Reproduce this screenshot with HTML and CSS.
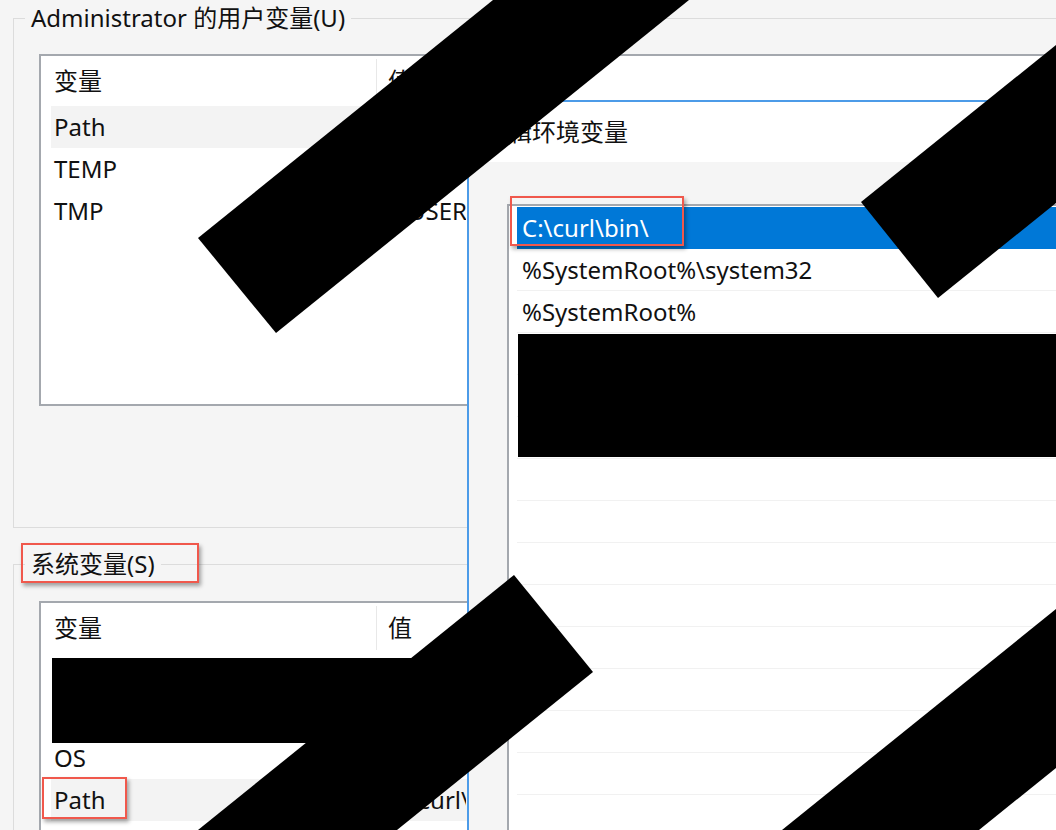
FILE: index.html
```html
<!DOCTYPE html>
<html lang="zh-CN">
<head>
    <meta charset="UTF-8">
    <title>环境变量</title>
    <link rel="stylesheet" href="styles.css">
</head>
<body>
    <div class="screen">
        <div class="win-back">
            <fieldset class="group group-user">
                <legend>Administrator 的用户变量(U)</legend>
                <div class="listview lv-user">
                    <div class="lv-head"><span class="c1">变量</span><span class="c2">值</span></div>
                    <div class="lv-row hot"><span class="c1">Path</span><span class="c2">C:\Users\Administrator</span></div>
                    <div class="lv-row"><span class="c1">TEMP</span><span class="c2">%USERPROFILE%</span></div>
                    <div class="lv-row"><span class="c1">TMP</span><span class="c2">%USERPROFILE%</span></div>
                </div>
            </fieldset>

            <fieldset class="group group-sys">
                <legend>系统变量(S)</legend>
                <div class="listview lv-sys">
                    <div class="lv-head"><span class="c1">变量</span><span class="c2">值</span></div>
                    <div class="lv-row"><span class="c1"></span><span class="c2"></span></div>
                    <div class="lv-row"><span class="c1"></span><span class="c2"></span></div>
                    <div class="lv-row"><span class="c1">OS</span><span class="c2">Windows_NT</span></div>
                    <div class="lv-row hot"><span class="c1">Path</span><span class="c2">C:\curl\bin\</span></div>
                </div>
            </fieldset>
        </div>

        <!-- 编辑环境变量 对话框 -->
        <div class="win-edit">
            <div class="titlebar">编辑环境变量</div>
            <div class="edit-body">
                <div class="pathlist">
                    <div class="path-item selected">C:\curl\bin\</div>
                    <div class="path-item">%SystemRoot%\system32</div>
                    <div class="path-item">%SystemRoot%</div>
                    <div class="path-item"></div>
                    <div class="path-item"></div>
                    <div class="path-item"></div>
                    <div class="path-item"></div>
                    <div class="path-item"></div>
                    <div class="path-item"></div>
                    <div class="path-item"></div>
                    <div class="path-item"></div>
                    <div class="path-item"></div>
                    <div class="path-item"></div>
                    <div class="path-item"></div>
                    <div class="path-item"></div>
                </div>
            </div>
        </div>

        <!-- 标注框 -->
        <div class="mark mark-sys"></div>
        <div class="mark mark-path"></div>
        <div class="mark mark-curl"></div>

        <!-- 涂黑 -->
        <svg class="redact" viewBox="0 0 1056 830" width="1056" height="830">
            <polygon points="198,238 276,333 689,0 493,0"/>
            <polygon points="861,202 938,298 1056,203 1056,45"/>
            <polygon points="514,575 593,672 397,830 198,830"/>
            <polygon points="1056,609 1056,768 979,830 782,830"/>
            <rect x="52" y="658" width="408" height="85"/>
            <rect x="518" y="334" width="538" height="123"/>
        </svg>
    </div>
</body>
</html>
```

FILE: styles.css
```css
body {
    margin: 0;
    font-family: 'Noto Sans', 'Noto Sans CJK SC', sans-serif;
    font-size: 24px;
    color: #111;
    background: #f5f5f5;
}
.screen {
    position: relative;
    width: 1056px;
    height: 830px;
    overflow: hidden;
    background: #f5f5f5;
}
.win-back {
    width: 1200px;
}
.group {
    border: 1px solid #dcdcdc;
    margin: 0 0 0 13px;
    padding: 18px 0 121px 25px;
    min-width: 0;
}
.group legend {
    padding: 0 6px;
    margin-left: -14px;
    line-height: 36px;
}
.group-sys {
    margin-top: 18px;
    padding: 19px 0 0 25px;
}
.listview {
    background: #fff;
    border: 2px solid #a4a8ae;
    border-right: none;
}
.lv-user {
    height: 348px;
}
.lv-sys {
    height: 300px;
}
.lv-head,
.lv-row {
    display: flex;
    margin-left: 10px;
    height: 42px;
    line-height: 42px;
    white-space: nowrap;
}
.lv-head {
    height: 50px;
    line-height: 50px;
}
.c1 {
    box-sizing: border-box;
    width: 326px;
    padding-left: 3px;
    flex: none;
}
.c2 {
    box-sizing: border-box;
    width: 89px;
    padding-left: 11px;
    overflow: hidden;
}
.lv-head .c1 {
    border-right: 1px solid #e8e8e8;
    margin: 3px 0;
    line-height: 44px;
}
.lv-head .c2 {
    line-height: 50px;
}
.lv-row.hot {
    background: #f3f3f3;
}

.win-edit {
    position: absolute;
    left: 467px;
    top: 100px;
    width: 620px;
    height: 760px;
    border-left: 2px solid #4c9be8;
    border-top: 2px solid #4c9be8;
    background: #f5f5f5;
}
.titlebar {
    height: 60px;
    line-height: 60px;
    padding-left: 15px;
    background: #fff;
}
.edit-body {
    padding: 42px 0 0 38px;
}
.pathlist {
    background: #fff;
    border-left: 2px solid #a4a8ae;
    border-top: 2px solid #a4a8ae;
    padding-top: 1px;
    height: 700px;
}
.path-item {
    box-sizing: border-box;
    height: 42px;
    line-height: 41px;
    margin-left: 8px;
    padding-left: 5px;
    border-bottom: 1px solid #f1f1f1;
    white-space: nowrap;
}
.path-item.selected {
    background: #0078d7;
    color: #fff;
    border-bottom-color: #0078d7;
}

.mark {
    position: absolute;
    border: 2px solid #f0584c;
    box-shadow: 2px 3px 4px rgba(0,0,0,0.35);
}
.mark-sys {
    left: 21px;
    top: 543px;
    width: 174px;
    height: 36px;
}
.mark-path {
    left: 42px;
    top: 777px;
    width: 81px;
    height: 38px;
}
.mark-curl {
    left: 510px;
    top: 196px;
    width: 170px;
    height: 46px;
}
.redact {
    position: absolute;
    left: 0;
    top: 0;
    fill: #000;
}
```
